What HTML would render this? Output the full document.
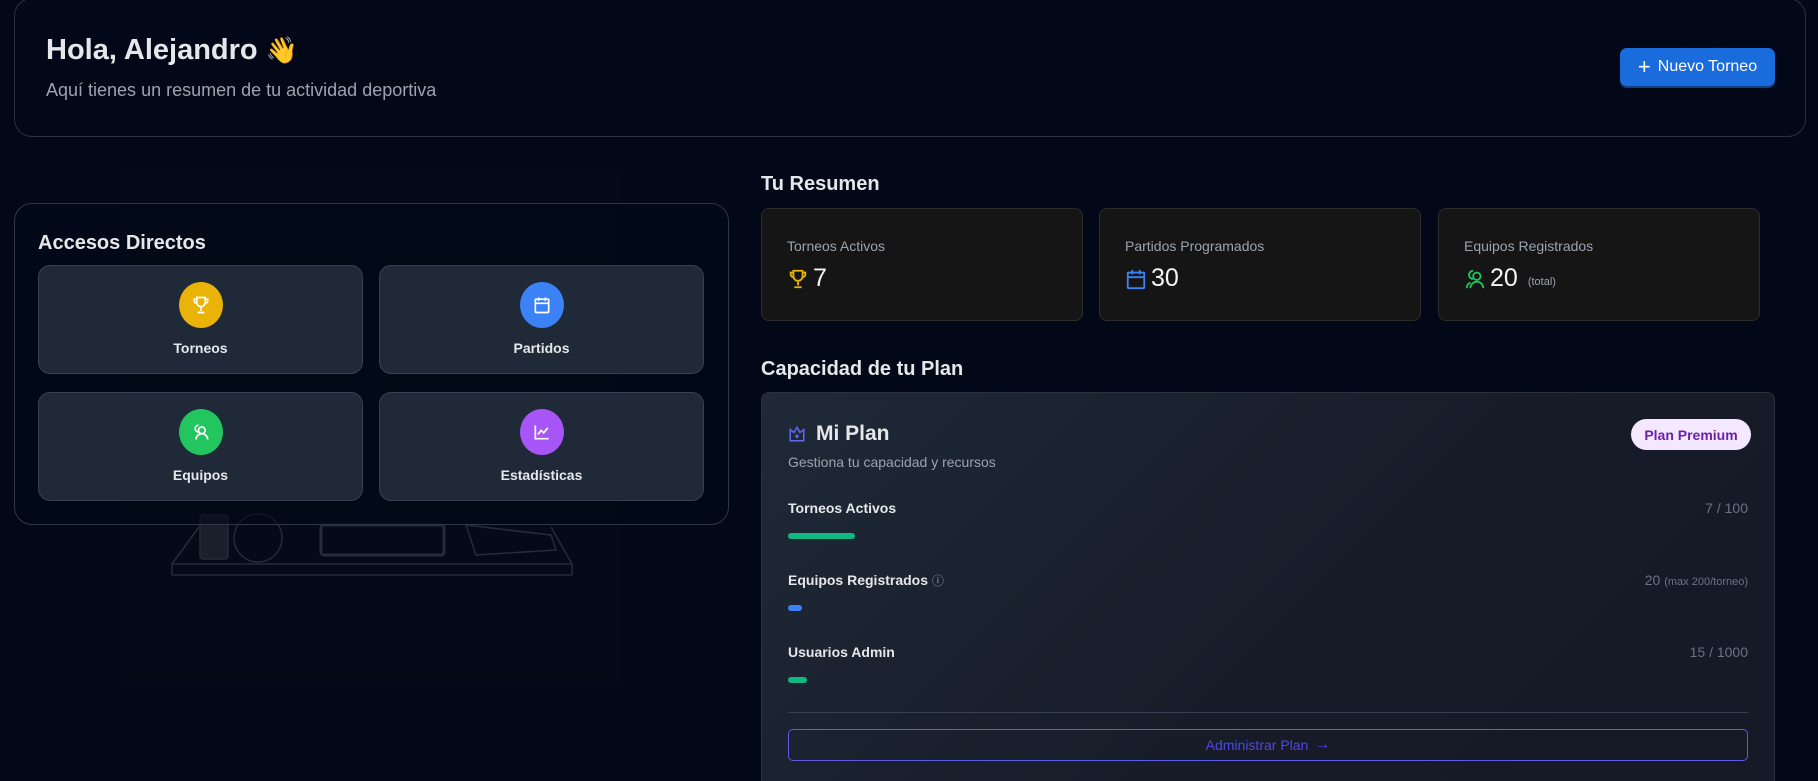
<!DOCTYPE html>
<html style="overflow:hidden;height:781px"><head><meta charset="utf-8"><style>
*{box-sizing:border-box;margin:0;padding:0}
body{width:1818px;height:781px;overflow:hidden;background:#020817;font-family:"Liberation Sans",sans-serif;color:#e5e7eb;position:relative}
.abs{position:absolute}
.hdr{left:14px;top:-2px;width:1792px;height:139px;border:1px solid #2a3142;border-radius:18px;background:#020817}
.ttl{font-weight:700;color:#e5e7eb}
.card{border-radius:18px;border:1px solid #2f3646}
.tile{background:#1f2937;border:1px solid #374151;border-radius:12px;width:325px;height:109px}
.circ{position:absolute;left:140px;top:16px;width:44px;height:46px;border-radius:50%;display:flex;align-items:center;justify-content:center}
.tl{position:absolute;left:0;right:0;top:74px;text-align:center;font-size:14px;font-weight:700;color:#e5e7eb}
.stat{background:#151515;border:1px solid #2c2c2c;border-radius:8px;width:322px;height:113px;top:208px}
.sl{position:absolute;left:25px;top:29px;font-size:14px;color:#9ca3af}
.sv{position:absolute;left:25px;top:55px;font-size:25px;color:#f3f4f6;display:flex;align-items:center;gap:4px}
.row{position:absolute;left:26px;right:26px;font-size:14px;font-weight:700;color:#e5e7eb}
.row .r{position:absolute;right:0;top:0;font-weight:400;color:#6b7280}
.bar{position:absolute;left:26px;height:6px;border-radius:3px}
</style></head><body>
<div class="abs hdr"></div>
<div class="abs ttl" style="left:46px;top:34px;font-size:29px;font-weight:600">Hola, Alejandro <span style="font-size:26px">👋</span></div>
<div class="abs" style="left:46px;top:80px;font-size:18px;color:#9ca3af">Aquí tienes un resumen de tu actividad deportiva</div>
<div class="abs" style="left:1620px;top:48px;width:155px;height:38px;background:#1a6bdc;border-radius:7px;box-shadow:0 2px 0 #0f3f85;color:#fff;font-size:16px;display:flex;align-items:center;justify-content:center;gap:7px"><span style="font-size:22px;font-weight:300;line-height:1">+</span>Nuevo Torneo</div>

<div class="abs" style="left:121px;top:174px;width:500px;height:508px;background:#040a18"></div>
<svg class="abs" style="left:121px;top:500px" width="500" height="90"><g fill="none" stroke="#262b38" stroke-width="1.5"><rect x="51" y="64" width="400" height="11"/><line x1="51" y1="64" x2="78" y2="27"/><line x1="451" y1="64" x2="430" y2="27"/><rect x="79" y="15" width="28" height="44" rx="3" fill="#1a1f2c"/><ellipse cx="137" cy="38" rx="24" ry="24"/><rect x="200" y="25" width="123" height="30" rx="3" stroke-width="3"/><path d="M345 25 l10 30 80 -5 -5 -15z"/></g></svg>

<div class="abs card" style="left:14px;top:203px;width:715px;height:322px;background:rgba(2,8,23,.6)"></div>
<div class="abs ttl" style="left:38px;top:232px;font-size:20px;font-weight:600">Accesos Directos</div>
<div class="abs tile" style="left:38px;top:265px"><div class="circ" style="background:#eab308"><svg width="20" height="20" viewBox="0 0 24 24" fill="none" stroke="#fff" stroke-width="2"><path d="M7 3h10v6a5 5 0 0 1-10 0z M7 5H4v2a3 3 0 0 0 3 3 M17 5h3v2a3 3 0 0 1-3 3 M12 14v5 M8 21h8"/></svg></div><div class="tl">Torneos</div></div>
<div class="abs tile" style="left:379px;top:265px"><div class="circ" style="background:#3b82f6"><svg width="20" height="20" viewBox="0 0 24 24" fill="none" stroke="#fff" stroke-width="2"><rect x="4" y="5" width="16" height="16" rx="1"/><path d="M4 10h16M8 3v4M16 3v4"/></svg></div><div class="tl">Partidos</div></div>
<div class="abs tile" style="left:38px;top:392px"><div class="circ" style="background:#22c55e"><svg width="20" height="20" viewBox="0 0 24 24" fill="none" stroke="#fff" stroke-width="2"><circle cx="13" cy="10" r="4"/><path d="M6 21a7 7 0 0 1 14 0M9 12a4 4 0 0 1 0-8"/></svg></div><div class="tl">Equipos</div></div>
<div class="abs tile" style="left:379px;top:392px"><div class="circ" style="background:#a855f7"><svg width="20" height="20" viewBox="0 0 24 24" fill="none" stroke="#fff" stroke-width="2"><path d="M4 4v16h16M7 15l4-5 3 3 5-6"/></svg></div><div class="tl">Estadísticas</div></div>

<div class="abs ttl" style="left:761px;top:173px;font-size:20px;font-weight:600">Tu Resumen</div>
<div class="abs stat" style="left:761px"><div class="sl">Torneos Activos</div><div class="sv"><svg width="22" height="24" viewBox="0 0 24 24" fill="none" stroke="#eab308" stroke-width="2"><path d="M7 3h10v6a5 5 0 0 1-10 0z M7 5H4v2a3 3 0 0 0 3 3 M17 5h3v2a3 3 0 0 1-3 3 M12 14v5 M8 21h8"/></svg>7</div></div>
<div class="abs stat" style="left:1099px"><div class="sl">Partidos Programados</div><div class="sv"><svg width="22" height="24" viewBox="0 0 24 24" fill="none" stroke="#3b82f6" stroke-width="2"><rect x="3" y="5" width="18" height="17" rx="1"/><path d="M3 10h18M8 2v5M16 2v5"/></svg>30</div></div>
<div class="abs stat" style="left:1438px"><div class="sl">Equipos Registrados</div><div class="sv"><svg width="22" height="24" viewBox="0 0 24 24" fill="none" stroke="#22c55e" stroke-width="2"><circle cx="14" cy="9" r="4"/><path d="M7 22a7 7 0 0 1 14 0M10 12a4 4 0 0 1 0-9M3 22a6 6 0 0 1 4-6"/></svg>20 <span style="font-size:11px;color:#9ca3af;margin-left:6px;margin-top:6px">(total)</span></div></div>

<div class="abs ttl" style="left:761px;top:358px;font-size:20px;font-weight:600">Capacidad de tu Plan</div>
<div class="abs" style="left:761px;top:392px;width:1014px;height:389px;border:1px solid #2a3140;border-bottom:none;border-radius:8px 8px 0 0;background:linear-gradient(135deg,#1f2937,#161b27 60%,#151a26)">
 <div class="abs" style="left:26px;top:29px;display:flex;align-items:center;gap:10px;font-size:21px;font-weight:600;color:#e5e7eb"><svg width="18" height="20" viewBox="0 0 24 24" fill="none" stroke="#6366f1" stroke-width="2"><path d="M3 6l5 4 4-7 4 7 5-4v15H3z"/><circle cx="12" cy="15" r="1.3"/></svg>Mi Plan</div>
 <div class="abs" style="left:869px;top:26px;width:120px;height:31px;border-radius:16px;background:#f3e8ff;color:#6b21a8;font-weight:700;font-size:14px;display:flex;align-items:center;justify-content:center">Plan Premium</div>
 <div class="abs" style="left:26px;top:61px;font-size:14px;color:#9ca3af">Gestiona tu capacidad y recursos</div>
 <div class="row" style="top:107px">Torneos Activos<span class="r">7 / 100</span></div>
 <div class="bar" style="top:140px;width:67px;background:#10b981"></div>
 <div class="row" style="top:179px">Equipos Registrados <span style="font-weight:400;color:#9ca3af;font-size:12px">ⓘ</span><span class="r">20 <span style="font-size:11px">(max 200/torneo)</span></span></div>
 <div class="bar" style="top:212px;width:14px;background:#3b82f6"></div>
 <div class="row" style="top:251px">Usuarios Admin<span class="r">15 / 1000</span></div>
 <div class="bar" style="top:284px;width:19px;background:#10b981"></div>
 <div class="abs" style="left:26px;right:26px;top:319px;height:1px;background:#374151"></div>
 <div class="abs" style="left:26px;right:26px;top:336px;height:32px;border:1px solid #5b5be6;border-radius:5px;color:#4f46e5;font-size:14px;display:flex;align-items:center;justify-content:center;gap:6px">Administrar Plan <span style="font-size:16px">→</span></div>
</div>
</body></html>
